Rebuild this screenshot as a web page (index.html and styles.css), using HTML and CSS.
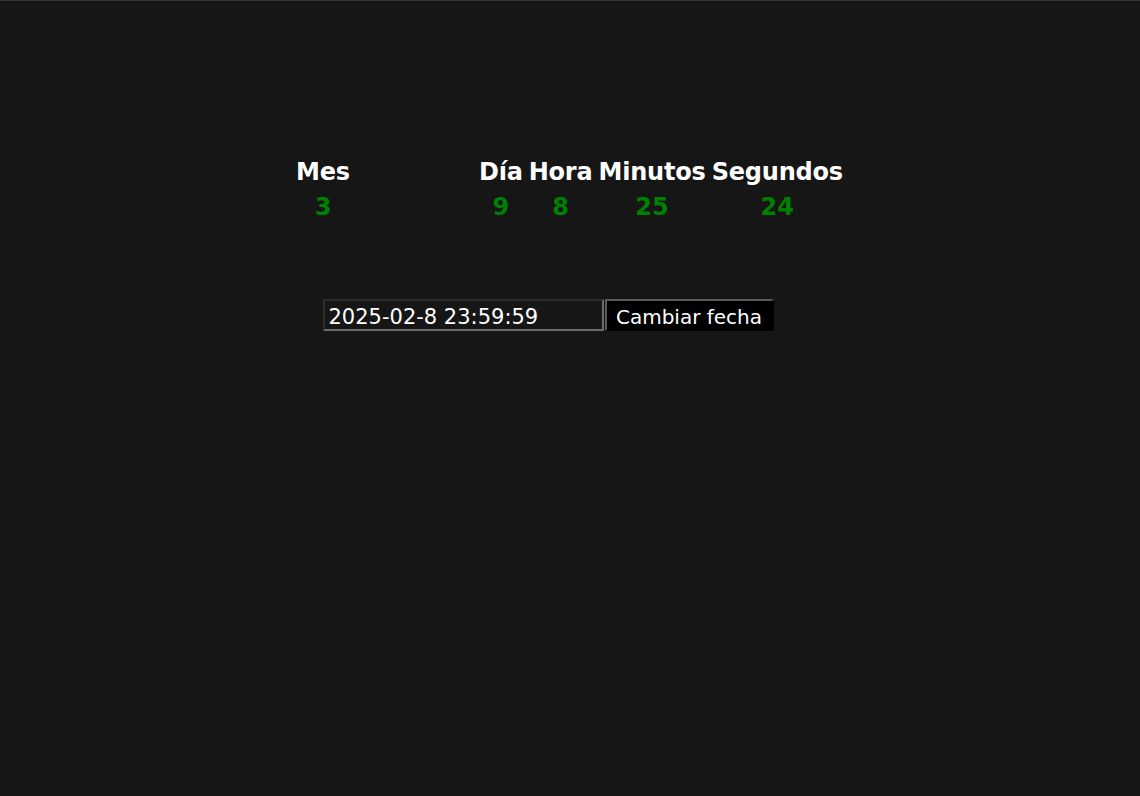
FILE: index.html
```html
<!DOCTYPE html>
<html lang="es">
<head>
<meta charset="utf-8">
<title>Cuenta atrás</title>
<link rel="stylesheet" href="styles.css">
</head>
<body>
<div class="page">
  <table class="countdown">
    <tr class="labels">
      <th class="c-mes">Mes</th>
      <th class="c-gap"></th>
      <th class="c-dia">Día</th>
      <th class="c-hora">Hora</th>
      <th class="c-min">Minutos</th>
      <th class="c-seg">Segundos</th>
    </tr>
    <tr class="values">
      <td>3</td>
      <td></td>
      <td>9</td>
      <td>8</td>
      <td>25</td>
      <td>24</td>
    </tr>
  </table>
  <form class="controls">
    <input class="date-input" type="text" value="2025-02-8 23:59:59">
    <button class="date-btn" type="button">Cambiar fecha</button>
  </form>
</div>
</body>
</html>
```
FILE: styles.css
```css
html, body {
  margin: 0;
  padding: 0;
  background: #161616;
  height: 100%;
}
body {
  border-top: 1px solid #3b2f3f;
  box-sizing: border-box;
  font-family: "DejaVu Sans", Verdana, sans-serif;
}
.page {
  display: flex;
  flex-direction: column;
  align-items: center;
  padding-top: 154px;
}
.countdown {
  border-collapse: separate;
  border-spacing: 0;
  font-size: 24px;
  font-weight: bold;
  margin-left: -1px;
}
.countdown th, .countdown td {
  padding: 0 3px;
  text-align: center;
}
.labels th {
  color: #ffffff;
  height: 34px;
  letter-spacing: -0.2px;
}
.values td {
  color: #008000;
  height: 36px;
}
.c-gap { width: 117px; }
.controls {
  display: flex;
  margin: 74px 0 0 0;
  gap: 1px;
  transform: translateX(-22px);
}
.date-input {
  width: 281px;
  height: 32px;
  box-sizing: border-box;
  background: #161616;
  color: #ffffff;
  font-family: "DejaVu Sans", Verdana, sans-serif;
  font-size: 21px;
  padding: 3px 4px 0;
  border-style: solid;
  border-width: 2px;
  border-color: #2b2b2b #6a6a6a #6a6a6a #2b2b2b;
  outline: none;
}
.date-btn {
  width: 169px;
  height: 32px;
  box-sizing: border-box;
  background: #000000;
  color: #ffffff;
  font-family: "DejaVu Sans", Verdana, sans-serif;
  font-size: 20px;
  padding: 3px 8px 0;
  border-style: solid;
  border-width: 2px;
  border-color: #5a5a5a #000000 #000000 #5a5a5a;
}
```
